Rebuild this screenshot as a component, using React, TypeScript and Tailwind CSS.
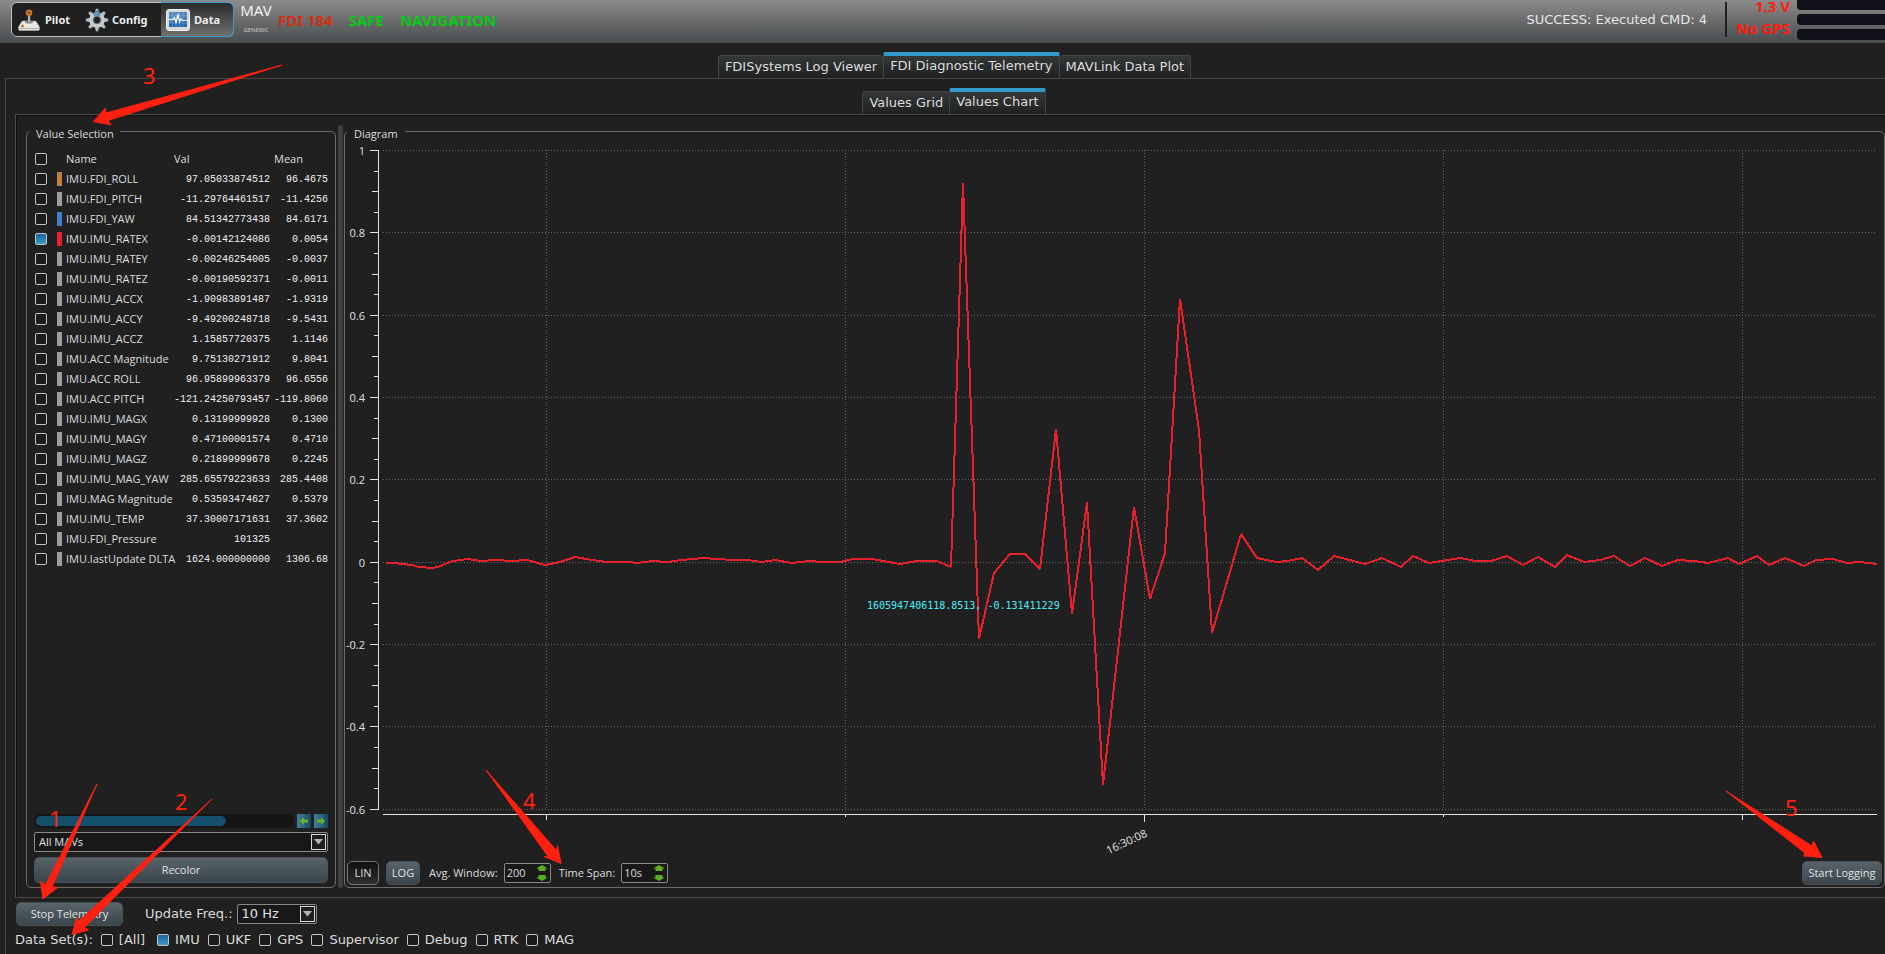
import { useState } from 'react'
import type { ReactNode } from 'react'

interface Channel {
  name: string
  val: string
  mean: string
  color?: string
}

const CHANNELS: Channel[] = [
  { name: 'IMU.FDI_ROLL', val: '97.05033874512', mean: '96.4675', color: 'bg-[#c08040]' },
  { name: 'IMU.FDI_PITCH', val: '-11.29764461517', mean: '-11.4256' },
  { name: 'IMU.FDI_YAW', val: '84.51342773438', mean: '84.6171', color: 'bg-[#4080c8]' },
  { name: 'IMU.IMU_RATEX', val: '-0.00142124086', mean: '0.0054', color: 'bg-[#e82030]' },
  { name: 'IMU.IMU_RATEY', val: '-0.00246254005', mean: '-0.0037' },
  { name: 'IMU.IMU_RATEZ', val: '-0.00190592371', mean: '-0.0011' },
  { name: 'IMU.IMU_ACCX', val: '-1.90983891487', mean: '-1.9319' },
  { name: 'IMU.IMU_ACCY', val: '-9.49200248718', mean: '-9.5431' },
  { name: 'IMU.IMU_ACCZ', val: '1.15857720375', mean: '1.1146' },
  { name: 'IMU.ACC Magnitude', val: '9.75130271912', mean: '9.8041' },
  { name: 'IMU.ACC ROLL', val: '96.95899963379', mean: '96.6556' },
  { name: 'IMU.ACC PITCH', val: '-121.24250793457', mean: '-119.8060' },
  { name: 'IMU.IMU_MAGX', val: '0.13199999928', mean: '0.1300' },
  { name: 'IMU.IMU_MAGY', val: '0.47100001574', mean: '0.4710' },
  { name: 'IMU.IMU_MAGZ', val: '0.21899999678', mean: '0.2245' },
  { name: 'IMU.IMU_MAG_YAW', val: '285.65579223633', mean: '285.4408' },
  { name: 'IMU.MAG Magnitude', val: '0.53593474627', mean: '0.5379' },
  { name: 'IMU.IMU_TEMP', val: '37.30007171631', mean: '37.3602' },
  { name: 'IMU.FDI_Pressure', val: '101325', mean: '' },
  { name: 'IMU.lastUpdate DLTA', val: '1624.000000000', mean: '1306.68' },
]

const DATA_SETS = ['[All]', 'IMU', 'UKF', 'GPS', 'Supervisor', 'Debug', 'RTK', 'MAG']

const TRACE =
  '386,563 398,563.5 412,565 419,567 432,568 438,567 451,561.5 467,559 482,561 495,560 512,561 527,560 545,565 560,562 575,557 592,560 607,562 628,562 637,563 653,561 667,562 682,560 703,558 725,559.5 747,560 762,562 775,560 792,563 810,561 822,562 840,562 853,559 ' +
  '872,559 900,564 917,561 937,561 951,567 963,183 979,639 994,573 1010,554 1025,554 1040,569 1056,429 1072,614 1087,502.5 1103,785 1134,507 1150,599 1165,553 1180,299 1199,430 1212,633 1241,534 1257,558 1276,562 ' +
  '1288,561 1302,558 1318,570 1334,556 1365,564 1382,558 1401,567 1413,556 1429,563 1460,558 1476,561 1491,561 1507,556 1523,565 1538,557 1555,567 1567,555 1584,562 1600,560 1614,556 1630,566 1645,558 1662,566 1678,560 1694,561 1708,563 1728,558 1739,564 1757,556 1769,565 1785,558 1804,566 1816,560 1833,559 1847,563 1859,562 1877,564'

const Y_LABELS = ['1', '0.8', '0.6', '0.4', '0.2', '0', '-0.2', '-0.4', '-0.6']
const X_GRID = [546, 845, 1144, 1443, 1742]
const MAJOR_STEP = 82.35
const TOP = 150

const yAt = (i: number) => Math.round(TOP + i * MAJOR_STEP) + 0.5

const box =
  'appearance-none size-3 shrink-0 rounded-[2px] border border-[#c4c4c4] bg-[#1c1c1c] checked:bg-linear-to-b checked:from-[#1d62a0] checked:to-[#3a9cc8]'
const steel =
  'rounded-[5px] border border-[#4a5257] bg-linear-to-b from-[#59636a] to-[#3a464b] text-[#e0e0e0]'
const small = "font-['Open_Sans',sans-serif] text-[11px] leading-[14px]"
const mono = "pt-0.5 font-['Liberation_Mono',monospace] text-[10px] text-[#f0f0f0]"

function Tab({ active, children }: { active?: boolean; children: ReactNode }) {
  return (
    <button
      role="tab"
      aria-selected={!!active}
      className={
        active
          ? 'h-[26px] border-x border-t-4 border-x-[#444] border-t-[#3399c8] bg-linear-to-b from-[#353838] to-[#202020] px-1.5 pb-0.5 rounded-t-[2px]'
          : 'h-[23px] border-x border-t border-[#444] bg-linear-to-b from-[#353838] to-[#202020] px-1.5 pb-px rounded-t-[3px] not-last:border-r-0 [[aria-selected=true]+&]:border-l-0'
      }
    >
      {children}
    </button>
  )
}

function Combo({ label, value, className }: { label: string; value: string; className: string }) {
  return (
    <div className={`relative flex rounded-[2px] border border-[#8a8a8a] bg-[#181818] ${className}`}>
      <select aria-label={label} className="w-full appearance-none bg-transparent px-1 text-[#e0e0e0]">
        <option>{value}</option>
      </select>
      <span className="pointer-events-none absolute inset-y-px right-px flex w-[15px] items-center justify-center border border-[#d8d8d8] bg-[#202020]">
        <svg viewBox="0 0 10 6" className="w-[9px]">
          <path d="M0 0h10L5 6z" fill="#b0b4b4" />
        </svg>
      </span>
    </div>
  )
}

function Spin({ id, value }: { id: string; value: string }) {
  return (
    <div className="flex h-5 w-[47px] items-center rounded-[2px] border border-[#8a8a8a] bg-[#181818] pl-0.5">
      <input id={id} defaultValue={value} className="w-7 bg-transparent" />
      <svg viewBox="0 0 12 16" className="ml-auto mr-0.5 h-4 w-3" fill="#5cae20">
        <path d="M6 0l6 3.500H9.500V6h-7V3.500H0z" />
        <path d="M6 16l6-3.500H9.500V10h-7v2.500H0z" />
      </svg>
    </div>
  )
}

function Joystick() {
  return (
    <svg viewBox="0 0 22 22" className="size-[22px]">
      <path d="M3.500 13q.3-1 1.500-1h12q1.200 0 1.500 1L21.500 18v2q0 1.500-1.500 1.500H2Q.5 21.500.5 20v-2z" fill="#e8e8e4" stroke="#a8a8a4" strokeWidth=".6" />
      <ellipse cx="11" cy="13" rx="4" ry="1.500" fill="#888" />
      <path d="M10 5h2.200v8H10z" fill="#b8b8b8" />
      <circle cx="11" cy="3.800" r="3.300" fill="#c87830" />
      <circle cx="10.800" cy="3.500" r="1.300" fill="#8a4818" />
      <circle cx="4.500" cy="17" r="1.500" fill="#d07828" />
      <path d="M1.500 19.500h19" stroke="#b0b0ac" />
    </svg>
  )
}

function Gear() {
  return (
    <svg viewBox="0 0 24 24" className="size-6">
      {[0, 45, 90, 135, 180, 225, 270, 315].map((a) => (
        <path key={a} d="M9.800 5.500L10.800.8h2.400l1 4.700z" fill="#b4bcc0" transform={`rotate(${a} 12 12)`} />
      ))}
      <circle cx="12" cy="12" r="5.800" fill="none" stroke="#c4ccd0" strokeWidth="4" />
      <path d="M8 5.200L12 2l4 3.200-1 3.300H9z" fill="#3c78b0" opacity=".7" />
      <circle cx="12" cy="12" r="3.800" fill="#242424" stroke="#8e979c" strokeWidth=".7" />
    </svg>
  )
}

function Monitor() {
  return (
    <svg viewBox="0 0 24 22" className="h-[22px] w-6">
      <rect x=".5" y=".5" width="23" height="21" rx="2.500" fill="#d8dad8" stroke="#f0f0f0" />
      <rect x="3" y="3" width="18" height="15" fill="#2a68b0" />
      <path d="M3 3h18v6q-9 0-18 5z" fill="#5088c4" />
      <path d="M6.500 3v15M10 3v15M13.500 3v15M17 3v15M3 6.500h18M3 10h18M3 14h18" stroke="#78a8d8" strokeWidth=".5" />
      <path d="M3 10.500h4l1.500-2 1.500 5.500 2-9 1.500 8 1.500-3 1.500 1.500H21" fill="none" stroke="#fff" strokeWidth="1.200" />
    </svg>
  )
}

function ScrollArrow({ label, flip }: { label: string; flip?: boolean }) {
  return (
    <button aria-label={label} className="flex size-[14px] items-center justify-center bg-linear-to-r from-[#467e96] to-[#124a68]">
      <svg viewBox="0 0 10 10" className={flip ? 'size-2 rotate-180' : 'size-2'}>
        <path d="M0 3h5V0l5 5-5 5V7H0z" fill="#68b428" />
      </svg>
    </button>
  )
}

function Header() {
  return (
    <header className="flex h-[43px] items-start bg-linear-to-b from-[#8c8c8c] via-[#6a6a6a] to-[#484e50] pl-[11px]">
      <nav className="mt-0.5 flex h-[35px] rounded-md border border-[#c0c0c0] bg-[#202020] font-['Noto_Sans',sans-serif] text-[11px] font-bold text-[#ececec]">
        <button className="flex w-[67px] items-center gap-[5px] pl-1.5">
          <Joystick />
          Pilot
        </button>
        <button className="flex w-[82px] items-center gap-[3px] pl-1.5">
          <Gear />
          Config
        </button>
        <button className="-my-px -mr-px flex w-[73px] items-center gap-1 rounded-r-md border border-l-0 border-[#3c9ccc] bg-linear-to-b from-[#2c2c2c] to-[#707070] pl-[5px]">
          <Monitor />
          Data
        </button>
      </nav>
      <div className="ml-[5px] w-[34px] text-center font-['Noto_Sans',sans-serif] text-[#f0f0f0]">
        <p className="text-[15px] leading-5">MAV</p>
        <p className="mt-1 text-[6px] leading-3 text-[#c8c8c8]">GENERIC</p>
      </div>
      <div className="ml-[5px] flex gap-4 font-['Noto_Sans',sans-serif] text-[15px] leading-10 font-bold text-[#08c818]">
        <span className="text-[#d03010]">FDI 184</span>
        <span>SAFE</span>
        <span>NAVIGATION</span>
      </div>
      <p className="ml-auto text-[13px] leading-10 text-[#e8e8e8]">SUCCESS: Executed CMD: 4</p>
      <div className="mt-0.5 ml-[18px] h-[35px] w-0.5 bg-[#202020]" />
      <div className="w-[63px] text-right font-['Noto_Sans',sans-serif] text-[15px] font-bold text-[#ff1c10]">
        <p className="leading-3">1.3 V</p>
        <p className="mt-1 leading-6">No GPS</p>
      </div>
      <div className="ml-[7px] flex w-[88px] flex-col gap-1 overflow-hidden">
        <div className="-mr-2 h-[10px] rounded-b-[4px] bg-[#101018]" />
        <div className="-mr-2 h-[11px] rounded-[4px] bg-[#101018]" />
        <div className="-mr-2 h-[11px] rounded-[4px] bg-[#101018]" />
      </div>
    </header>
  )
}

function ValueSelection() {
  const [selected, setSelected] = useState<string[]>(['IMU.IMU_RATEX'])
  const toggle = (name: string) =>
    setSelected((s) => (s.includes(name) ? s.filter((n) => n !== name) : [...s, name]))

  return (
    <fieldset className={`flex w-[310px] shrink-0 flex-col rounded-[5px] border border-[#6c6c6c] px-[7px] pb-1 ${small}`}>
      <legend className="-ml-1 px-1.5 pt-1.5">Value Selection</legend>
      <table className="mt-2 w-full table-fixed border-collapse text-left">
        <colgroup>
          <col className="w-[23px]" />
          <col className="w-[9px]" />
          <col className="w-[108px]" />
          <col />
          <col className="w-[58px]" />
        </colgroup>
        <thead>
          <tr className="h-5">
            <th><input type="checkbox" aria-label="Select all" className={`${box} ml-px block`} /></th>
            <th />
            <th className="font-normal">Name</th>
            <th className="font-normal">Val</th>
            <th className="pl-1 font-normal">Mean</th>
          </tr>
        </thead>
        <tbody>
          {CHANNELS.map((c) => (
            <tr key={c.name} className="h-5">
              <td>
                <input
                  type="checkbox"
                  id={c.name}
                  checked={selected.includes(c.name)}
                  onChange={() => toggle(c.name)}
                  className={`${box} ml-px block`}
                />
              </td>
              <td><div className={`h-[14px] w-[5px] ${c.color ?? 'bg-[#9ca09c]'}`} /></td>
              <td className="whitespace-nowrap"><label htmlFor={c.name}>{c.name}</label></td>
              <td className={mono}>
                <div className="flex justify-end">{c.val}</div>
              </td>
              <td className={`${mono} text-right`}>{c.mean}</td>
            </tr>
          ))}
        </tbody>
      </table>
      <div className="mt-auto mb-1 flex gap-[3px]">
        <div className="flex flex-1 rounded-full bg-[#151515] p-0.5">
          <div className="h-[10px] w-[190px] rounded-full bg-[#14506b]" />
        </div>
        <ScrollArrow label="Scroll left" flip />
        <ScrollArrow label="Scroll right" />
      </div>
      <Combo label="MAV filter" value="All MAVs" className="h-5" />
      <button className={`mt-[5px] h-[26px] ${steel}`}>Recolor</button>
    </fieldset>
  )
}

function Chart() {
  return (
    <svg
      viewBox="345 141 1539 700"
      preserveAspectRatio="xMinYMin meet"
      className="min-h-0 w-full flex-1 basis-0 overflow-visible font-['Open_Sans',sans-serif] text-[11px]"
    >
      <g stroke="#686868" strokeDasharray="1 2">
        {Y_LABELS.map((l, i) => (
          <line key={l} x1="383" x2="1876" y1={yAt(i)} y2={yAt(i)} />
        ))}
        {X_GRID.map((x) => (
          <line key={x} x1={x + 0.5} x2={x + 0.5} y1="150" y2="810" />
        ))}
      </g>
      <g stroke="#e4e4e4">
        <line x1="378.5" x2="378.5" y1="150" y2="810" />
        <line x1="383" x2="1877" y1="814.5" y2="814.5" />
        {Array.from({ length: 33 }, (_, n) => (
          <line key={n} x1={n % 4 === 0 ? 370 : n % 2 === 0 ? 372 : 374} x2="378" y1={yAt(n / 4)} y2={yAt(n / 4)} />
        ))}
        {X_GRID.map((x) => (
          <line key={x} x1={x + 0.5} x2={x + 0.5} y1="815" y2={x === 1144 ? 822 : x === 546 || x === 1742 ? 820 : 817} />
        ))}
      </g>
      <g fill="#e0e0e0" textAnchor="end">
        {Y_LABELS.map((l, i) => (
          <text key={l} x="365" y={yAt(i) + 4.5}>{l}</text>
        ))}
        <text transform="translate(1148 836) rotate(-25)">16:30:08</text>
      </g>
      <polyline points={TRACE} fill="none" stroke="#e8202e" strokeWidth="2" strokeLinejoin="bevel" shapeRendering="crispEdges" />
      <text x="867" y="609" fill="#4ceef8" className="font-['DejaVu_Sans_Mono',monospace] text-[10px]">
        1605947406118.8513, -0.131411229
      </text>
    </svg>
  )
}

function Diagram() {
  return (
    <fieldset className={`flex min-w-0 flex-1 flex-col rounded-[5px] border border-[#6c6c6c] ${small}`}>
      <legend className="ml-0.5 px-[7px] pt-1.5">Diagram</legend>
      <Chart />
      <div className="flex h-[27px] shrink-0 items-center px-0.5 pb-0.5">
        <button className="h-6 w-8 rounded-[5px] border border-[#787878] bg-linear-to-b from-[#101014] to-[#303030]">LIN</button>
        <button className={`ml-[7px] h-6 w-[34px] ${steel}`}>LOG</button>
        <label htmlFor="avg" className="mr-1.5 ml-[9px]">Avg. Window:</label>
        <Spin id="avg" value="200" />
        <label htmlFor="span" className="mr-1.5 ml-2">Time Span:</label>
        <Spin id="span" value="10s" />
        <button className={`ml-auto h-6 w-20 ${steel}`}>Start Logging</button>
      </div>
    </fieldset>
  )
}

function Callouts() {
  return (
    <svg
      className="pointer-events-none absolute inset-0 size-full font-['Noto_Sans',sans-serif] text-[22px]"
      fill="#ff2010"
    >
      <g stroke="#ff2010" strokeLinejoin="round">
        <path d="M282 65L106 113l-.5-5L93.500 121.500l17.500 3.500-3-4.500z" />
        <path d="M97 784L45.500 885l-5-3.500L43 899l14.500-11.500-5.500-.5z" />
        <path d="M212 799L78 922l-1-5-5 17.500 16.500-4.500-4-2.500z" />
        <path d="M486 770l62.500 87-4.500-.5 17 7-3.500-18-1 5z" />
        <path d="M1726 791l79 62-1.500 3 18.500 1.500-8.500-16.500-1.500 5z" />
      </g>
      <text x="49" y="827">1</text>
      <text x="175" y="810">2</text>
      <text x="143" y="84">3</text>
      <text x="523" y="809">4</text>
      <text x="1785" y="816">5</text>
    </svg>
  )
}

export default function App() {
  return (
    <div className="relative flex min-h-screen flex-col overflow-hidden bg-[#202020] font-['DejaVu_Sans',sans-serif] text-[13px] leading-4 text-[#dcdcdc]">
      <Header />
      <div role="tablist" className="mt-[9px] flex items-end justify-center pl-6">
        <Tab>FDISystems Log Viewer</Tab>
        <Tab active>FDI Diagnostic Telemetry</Tab>
        <Tab>MAVLink Data Plot</Tab>
      </div>
      <main className="ml-[5px] flex flex-1 flex-col border-t border-l border-[#464646] pt-[9px] pl-[9px]">
        <div role="tablist" className="flex items-end justify-center pl-2">
          <Tab>Values Grid</Tab>
          <Tab active>Values Chart</Tab>
        </div>
        <section className="flex flex-1 border-y border-l border-[#4a4a4a] pt-1.5 pb-[9px] pl-[10px] shadow-[inset_1px_1px_0_#111]">
          <ValueSelection />
          <div className="mt-1 mr-px ml-0.5 w-[5px] rounded-full bg-[#404040]" />
          <Diagram />
        </section>
        <div className="mt-1 flex items-center">
          <button className={`ml-px h-6 w-[107px] ${steel} ${small}`}>Stop Telemetry</button>
          <span className="mr-1 ml-[22px]">Update Freq.:</span>
          <Combo label="Update frequency" value="10 Hz" className="h-5 w-20" />
        </div>
        <div className="mt-1 mb-1 flex h-5 items-center gap-2">
          <span>Data Set(s):</span>
          {DATA_SETS.map((d) => (
            <label key={d} className="flex items-center gap-1.5 first-of-type:mr-1">
              <input type="checkbox" defaultChecked={d === 'IMU'} className={box} />
              {d}
            </label>
          ))}
        </div>
      </main>
      <Callouts />
    </div>
  )
}
